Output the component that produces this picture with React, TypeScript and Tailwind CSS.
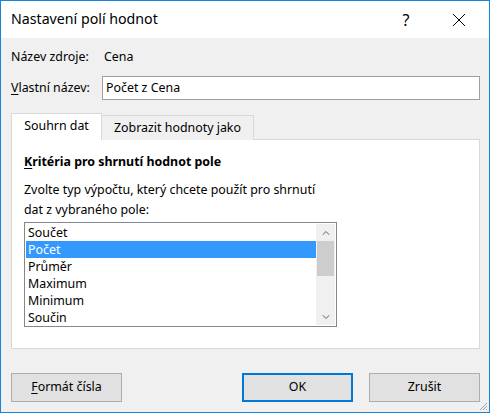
import { ChevronDown, ChevronUp } from "lucide-react";

const items = ["Součet", "Počet", "Průměr", "Maximum", "Minimum", "Součin"];

const Btn = ({ children, primary }: { children: React.ReactNode; primary?: boolean }) => (
  <button
    className={`w-[111px] h-[29px] bg-[#e1e1e1] text-black ${
      primary ? "border-2 border-[#0078d7]" : "border border-[#adadad]"
    }`}
  >
    {children}
  </button>
);

export default function App() {
  return (
    <div
      className="relative w-[490px] h-[413px] border border-[#1883d7] flex flex-col bg-[#f0f0f0] text-black text-[12.4px]"
      style={{ fontFamily: '"Noto Sans", "Open Sans", sans-serif' }}
    >
      {/* title bar */}
      <div className="h-[37px] bg-white flex items-center pl-[10px] shrink-0">
        <span className="text-[14.2px] flex-1 leading-none">Nastavení polí hodnot</span>
        <span className="text-[16px] leading-none w-[20px] mr-[36px] text-center">?</span>
        <svg width="14" height="14" viewBox="0 0 14 14" className="mr-[23px]">
          <path d="M1 1 L13 13 M13 1 L1 13" stroke="#000" strokeWidth="1" />
        </svg>
      </div>

      <div className="flex flex-col pl-[10px] pr-[9px] flex-1">
        <div className="flex items-center h-[20px] mt-[9px]">
          <span className="w-[93px]">Název zdroje:</span>
          <span>Cena</span>
        </div>

        <div className="flex items-center mt-[9px]">
          <span className="w-[91px]">
            <span className="underline underline-offset-2">V</span>lastní název:
          </span>
          <div className="flex-1 h-[24px] bg-white border border-[#a0a0a0] flex items-center px-[3px]">
            Počet z Cena
          </div>
        </div>

        {/* tabs */}
        <div className="flex items-end mt-[13px] h-[27px] relative z-10">
          <div className="w-[91px] h-[27px] bg-white border border-b-0 border-[#d9d9d9] flex items-center justify-center pb-[1px]">
            Souhrn dat
          </div>
          <div className="w-[152px] h-[25px] bg-[#f0f0f0] border border-l-0 border-b-0 border-[#d9d9d9] flex items-center justify-center">
            Zobrazit hodnoty jako
          </div>
        </div>

        <div className="h-[210px] -mt-px bg-white border border-[#d9d9d9] pl-[12px] pt-[13px]">
          <div className="font-bold leading-[17px]">
            <span className="underline underline-offset-2">K</span>ritéria pro shrnutí hodnot pole
          </div>
          <div className="mt-[10px] leading-[20px]">
            Zvolte typ výpočtu, který chcete použít pro shrnutí
            <br />
            dat z vybraného pole:
          </div>
          <div className="mt-[2px] w-[313px] h-[105px] border border-[#828790] flex p-px">
            <div className="flex-1 flex flex-col">
              {items.map((it, i) => (
                <div
                  key={it}
                  className={`h-[17px] leading-[17px] pl-[2px] ${
                    i === 1 ? "bg-[#3399ff] text-white" : ""
                  }`}
                >
                  {it}
                </div>
              ))}
            </div>
            <div className="w-[19px] bg-[#f0f0f0] flex flex-col">
              <div className="h-[17px] flex items-center justify-center">
                <ChevronUp size={12} strokeWidth={2} className="text-[#606060]" />
              </div>
              <div className="h-[35px] mx-px bg-[#cdcdcd]" />
              <div className="flex-1" />
              <div className="h-[17px] flex items-center justify-center">
                <ChevronDown size={12} strokeWidth={2} className="text-[#606060]" />
              </div>
            </div>
          </div>
        </div>

        <div className="flex items-center mt-[24px]">
          <Btn>
            <span className="underline underline-offset-2">F</span>ormát čísla
          </Btn>
          <div className="flex-1" />
          <Btn primary>OK</Btn>
          <div className="w-[16px]" />
          <Btn>Zrušit</Btn>
        </div>
      </div>

      <svg width="10" height="10" viewBox="0 0 10 10" className="absolute right-px bottom-px">
        <path d="M9 2 L2 9 M9 5 L5 9 M9 8 L8 9" stroke="#a0a0a0" strokeWidth="1" />
      </svg>
    </div>
  );
}
